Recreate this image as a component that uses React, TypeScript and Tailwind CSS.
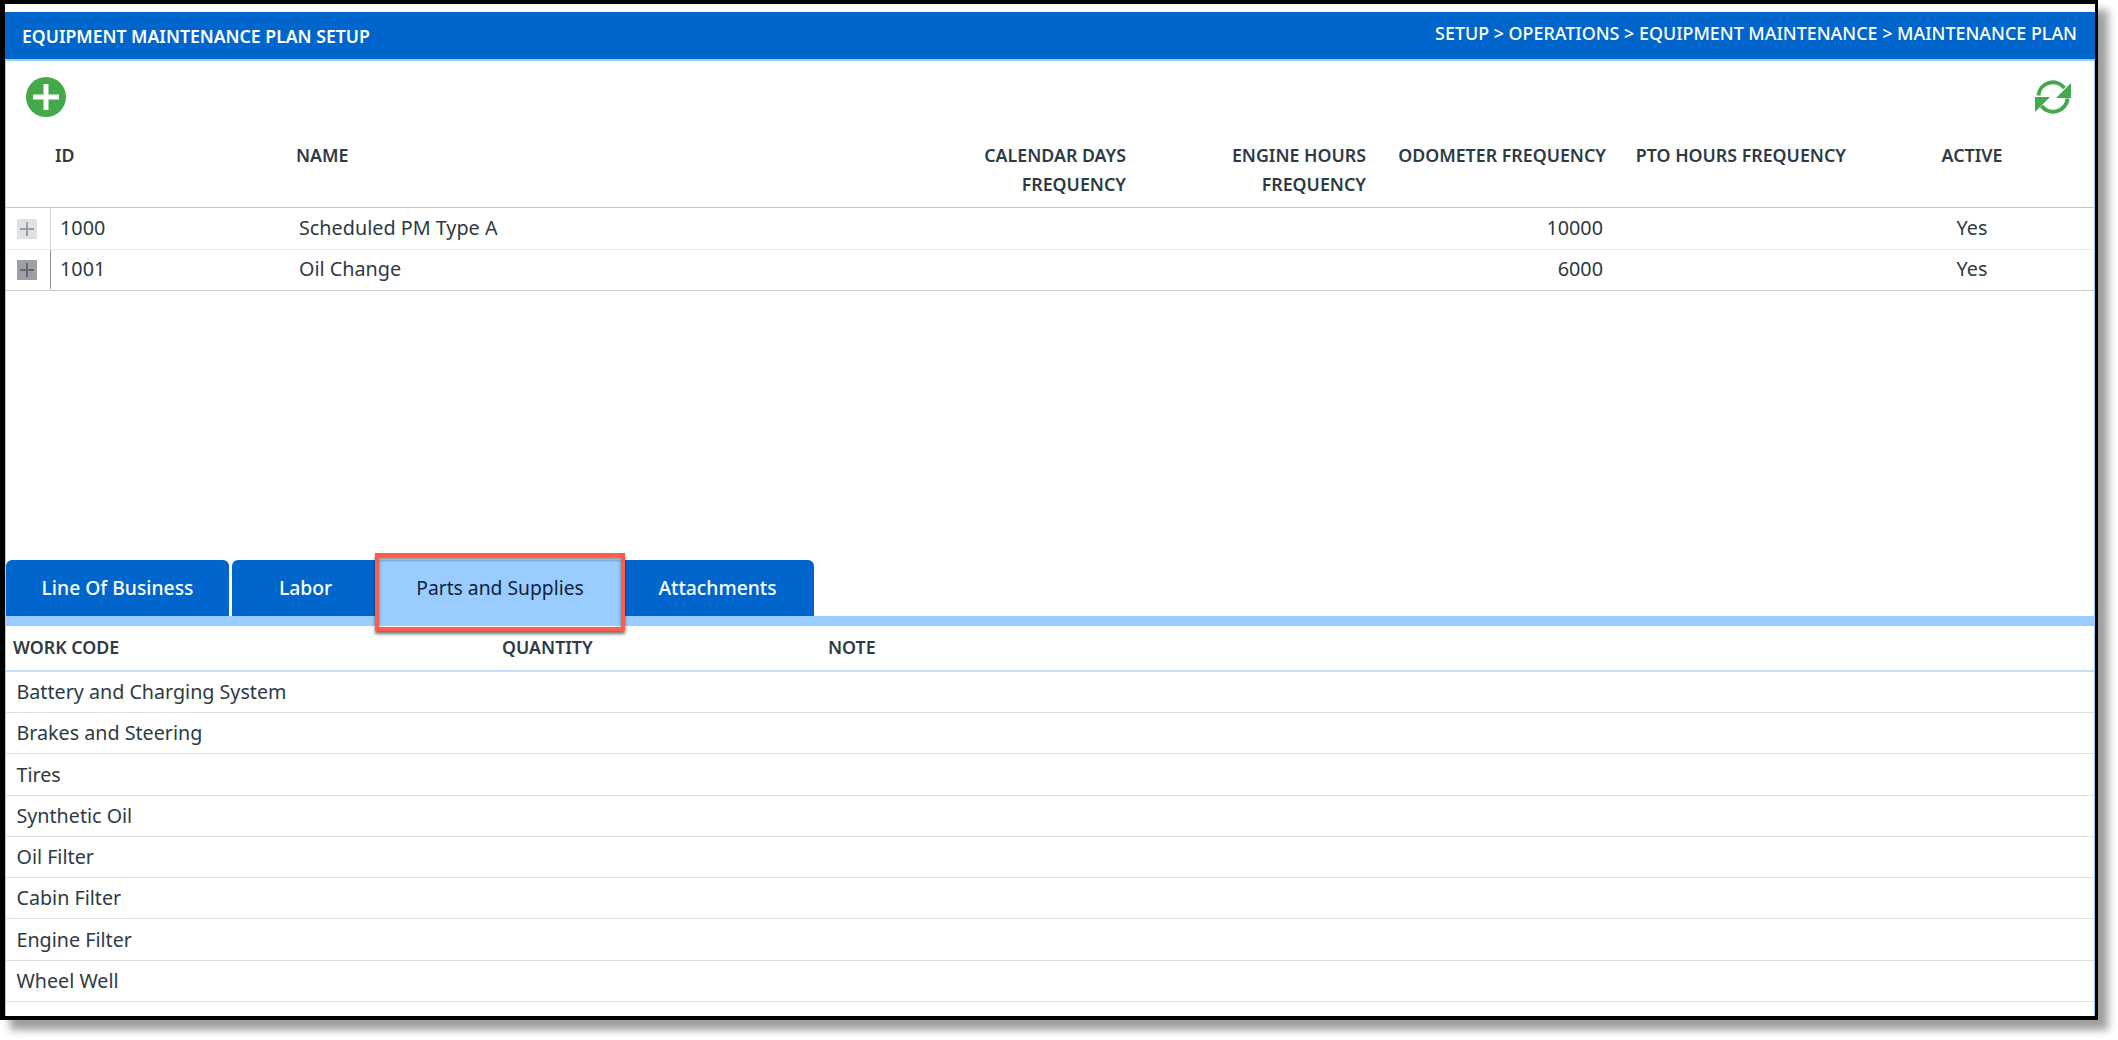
import React from "react";

const plans = [
  { id: "1000", name: "Scheduled PM Type A", odo: "10000", active: "Yes", box: "bg-[#dfe2e5] text-[#9a9ea2]", sep: "border-[#d9dcdc]", line: "border-[#e6eeea]" },
  { id: "1001", name: "Oil Change", odo: "6000", active: "Yes", box: "bg-[#9c9fa3] text-[#666a6e]", sep: "border-[#8f9396]", line: "border-[#c3d2c6] pb-[1px]" },
];

const codes = ["Battery and Charging System", "Brakes and Steering", "Tires", "Synthetic Oil", "Oil Filter", "Cabin Filter", "Engine Filter", "Wheel Well"];

const columns = "grid grid-cols-[44px_240px_600px_240px_240px_240px_240px_1fr]";

function AddIcon() {
  return (
    <svg viewBox="0 0 40 40" className="size-10">
      <circle cx="20" cy="20" r="20" fill="#43a94b" />
      <path d="M17.5 7h5v10.5H33v5H22.5V33h-5V22.5H7v-5h10.5z" fill="#fff" />
    </svg>
  );
}

function RefreshIcon() {
  return (
    <svg viewBox="0 0 40 40" className="size-10">
      <path d="M5.4 18.5A14.6 14.6 0 0 1 31.5 11" fill="none" stroke="#43a94b" strokeWidth="4" />
      <path d="M38 6v15H23z" fill="#43a94b" />
      <path d="M34.6 21.5A14.6 14.6 0 0 1 8.5 29" fill="none" stroke="#43a94b" strokeWidth="4" />
      <path d="M2 35V20h15z" fill="#43a94b" />
    </svg>
  );
}

export default function App() {
  return (
    <div className="h-[1040px] w-[2118px] overflow-hidden bg-white font-['Noto_Sans','Open_Sans',sans-serif] text-[#2e3a44]">
      <div className="h-[1020px] w-[2098px] border-b-4 border-l-[5px] border-r-[3px] border-t-4 border-black bg-white pt-2 shadow-[10px_10px_8px_rgba(0,0,0,0.38)]">
        <div className="flex h-full flex-col border-x border-[#99ccff]">
          <header className="-mx-px flex h-[49px] shrink-0 items-center justify-between border-b-2 border-[#99ccff] bg-[#0066cc] pl-[17px] pr-[18px] text-white">
            <h1 className="pt-[2px] text-[17.65px] font-semibold leading-none">EQUIPMENT MAINTENANCE PLAN SETUP</h1>
            <div className="pb-[4px] text-[17.9px] font-medium leading-none">SETUP &gt; OPERATIONS &gt; EQUIPMENT MAINTENANCE &gt; MAINTENANCE PLAN</div>
          </header>

          <div className="flex h-[80px] shrink-0 items-start justify-between pl-[20px] pr-[21px] pt-4">
            <AddIcon />
            <RefreshIcon />
          </div>

          <div className={`${columns} h-[67px] shrink-0 border-b border-[#99ccff] text-[17.8px] font-semibold leading-[29px]`}>
            <div />
            <div className="pl-[5px]">ID</div>
            <div className="pl-[6px]">NAME</div>
            <div className="pr-1 text-right">CALENDAR DAYS<br />FREQUENCY</div>
            <div className="pr-1 text-right">ENGINE HOURS<br />FREQUENCY</div>
            <div className="pr-1 text-right">ODOMETER FREQUENCY</div>
            <div className="pr-1 text-right">PTO HOURS FREQUENCY</div>
            <div className="text-center">ACTIVE</div>
          </div>

          {plans.map((p) => (
            <div key={p.id} className={`${columns} h-[41.5px] shrink-0 items-center border-b text-[19.8px] ${p.line}`}>
              <div className="flex h-full items-center pl-[11px] pt-[2px]">
                <span className={`flex size-5 items-center justify-center ${p.box}`}>
                  <svg viewBox="0 0 14 14" className="size-[14px]" fill="none" stroke="currentColor" strokeWidth="2"><path d="M7 0v14M0 7h14" /></svg>
                </span>
              </div>
              <div className={`flex h-full items-center border-l pl-[9px] ${p.sep}`}>{p.id}</div>
              <div className="pl-[9px]">{p.name}</div>
              <div />
              <div />
              <div className="pr-[7px] text-right">{p.odo}</div>
              <div />
              <div className="text-center">{p.active}</div>
            </div>
          ))}

          <div className="min-h-0 flex-1" />

          <div className="flex h-[56px] shrink-0 text-[19.3px] font-medium text-white">
            <div className="flex w-[223px] items-center justify-center rounded-t-md bg-[#0066cc] pt-[1px]">Line Of Business</div>
            <div className="ml-[3px] flex w-[147px] items-center justify-center rounded-tl-md bg-[#0066cc] pt-[1px]">Labor</div>
            <div className="relative flex w-[242px] items-center justify-center bg-[#99ccff] pt-[1px] font-normal text-[#13233a]">
              Parts and Supplies
              <div className="absolute -inset-x-1 -bottom-[15px] -top-[7px] border-[4px] border-[#ff5c50] shadow-[0_3px_3px_rgba(0,0,0,0.55),inset_0_3px_3px_rgba(0,0,0,0.45)]" />
            </div>
            <div className="flex w-[193px] items-center justify-center rounded-tr-md bg-[#0066cc] pt-[1px]">Attachments</div>
          </div>
          <div className="h-[10px] shrink-0 bg-[#99ccff]" />

          <div className="grid h-[45.6px] shrink-0 grid-cols-[489px_326px_1fr] items-center border-b-2 border-[#c5e0fb] pl-[7px] text-[17.8px] font-semibold">
            <div>WORK CODE</div>
            <div>QUANTITY</div>
            <div>NOTE</div>
          </div>

          {codes.map((c) => (
            <div key={c} className="flex h-[41.3px] shrink-0 items-center border-b border-[#e0e0e0] pl-[10.5px] text-[19.7px]">{c}</div>
          ))}
          <div className="h-[14px] shrink-0" />
        </div>
      </div>
    </div>
  );
}
